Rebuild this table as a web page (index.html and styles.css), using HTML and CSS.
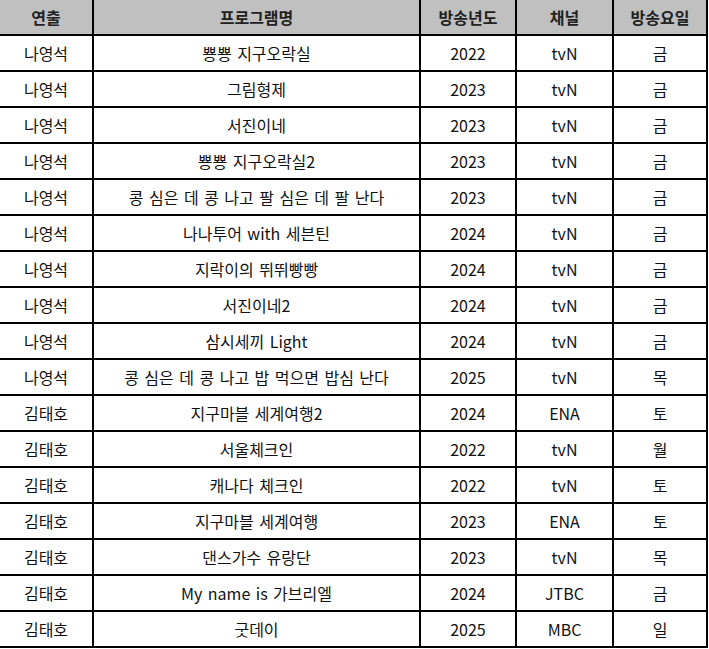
FILE: index.html
```html
<!DOCTYPE html>
<html lang="ko">
<head>
<meta charset="utf-8">
<title>프로그램 목록</title>
<link rel="stylesheet" href="styles.css">
</head>
<body>
<table class="shows">
  <colgroup>
    <col class="c-dir">
    <col class="c-title">
    <col class="c-year">
    <col class="c-ch">
    <col class="c-day">
  </colgroup>
  <thead>
    <tr><th>연출</th><th>프로그램명</th><th>방송년도</th><th>채널</th><th>방송요일</th></tr>
  </thead>
  <tbody>
    <tr><td>나영석</td><td>뿅뿅 지구오락실</td><td>2022</td><td>tvN</td><td>금</td></tr>
    <tr><td>나영석</td><td>그림형제</td><td>2023</td><td>tvN</td><td>금</td></tr>
    <tr><td>나영석</td><td>서진이네</td><td>2023</td><td>tvN</td><td>금</td></tr>
    <tr><td>나영석</td><td>뿅뿅 지구오락실2</td><td>2023</td><td>tvN</td><td>금</td></tr>
    <tr><td>나영석</td><td>콩 심은 데 콩 나고 팔 심은 데 팔 난다</td><td>2023</td><td>tvN</td><td>금</td></tr>
    <tr><td>나영석</td><td>나나투어 with 세븐틴</td><td>2024</td><td>tvN</td><td>금</td></tr>
    <tr><td>나영석</td><td>지락이의 뛰뛰빵빵</td><td>2024</td><td>tvN</td><td>금</td></tr>
    <tr><td>나영석</td><td>서진이네2</td><td>2024</td><td>tvN</td><td>금</td></tr>
    <tr><td>나영석</td><td>삼시세끼 Light</td><td>2024</td><td>tvN</td><td>금</td></tr>
    <tr><td>나영석</td><td>콩 심은 데 콩 나고 밥 먹으면 밥심 난다</td><td>2025</td><td>tvN</td><td>목</td></tr>
    <tr><td>김태호</td><td>지구마블 세계여행2</td><td>2024</td><td>ENA</td><td>토</td></tr>
    <tr><td>김태호</td><td>서울체크인</td><td>2022</td><td>tvN</td><td>월</td></tr>
    <tr><td>김태호</td><td>캐나다 체크인</td><td>2022</td><td>tvN</td><td>토</td></tr>
    <tr><td>김태호</td><td>지구마블 세계여행</td><td>2023</td><td>ENA</td><td>토</td></tr>
    <tr><td>김태호</td><td>댄스가수 유랑단</td><td>2023</td><td>tvN</td><td>목</td></tr>
    <tr><td>김태호</td><td>My name is 가브리엘</td><td>2024</td><td>JTBC</td><td>금</td></tr>
    <tr><td>김태호</td><td>굿데이</td><td>2025</td><td>MBC</td><td>일</td></tr>
  </tbody>
</table>
</body>
</html>
```

FILE: styles.css
```css
html, body {
  margin: 0;
  padding: 0;
  background: #ffffff;
}

.shows {
  border-collapse: separate;
  border-spacing: 0;
  table-layout: fixed;
  width: 708px;
  font-family: "Noto Sans CJK KR", "Noto Sans", sans-serif;
  font-size: 16px;
  word-spacing: 1px;
  color: #111;
}

.c-dir { width: 94px; }
.c-title { width: 327px; }
.c-year { width: 96px; }
.c-ch { width: 97px; }
.c-day { width: 94px; }

.shows th,
.shows td {
  box-sizing: border-box;
  height: 36px;
  padding: 0;
  border-right: 2px solid #000;
  border-bottom: 2px solid #000;
  text-align: center;
  vertical-align: middle;
  line-height: 20px;
  white-space: nowrap;
}

.shows th {
  background: #c0c0c0;
  font-weight: bold;
  color: #222;
}
```
